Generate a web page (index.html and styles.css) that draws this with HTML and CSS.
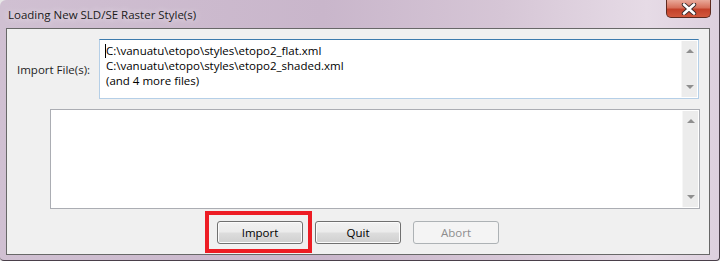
FILE: index.html
```html
<!DOCTYPE html>
<html lang="en">
<head>
    <meta charset="UTF-8">
    <title>Loading New SLD/SE Raster Style(s)</title>
    <link rel="stylesheet" href="styles.css">
</head>
<body>
    <div class="window">
        <div class="titlebar">
            <span class="title">Loading New SLD/SE Raster Style(s)</span>
            <div class="close">
                <svg width="18" height="12" viewBox="0 0 18 12">
                    <path d="M4 1.5 L14 10.5 M14 1.5 L4 10.5" stroke="#3a2a2a" stroke-width="4.4" stroke-linecap="round"/>
                    <path d="M4 1.5 L14 10.5 M14 1.5 L4 10.5" stroke="#ffffff" stroke-width="2.6" stroke-linecap="round"/>
                </svg>
            </div>
        </div>

        <div class="client">
            <div class="file-row">
                <label class="label">Import File(s):</label>
                <div class="textbox files">
                    <div class="text">
                        <div class="line"><span class="caret"></span>C:\vanuatu\etopo\styles\etopo2_flat.xml</div>
                        <div class="line">C:\vanuatu\etopo\styles\etopo2_shaded.xml</div>
                        <div class="line">(and 4 more files)</div>
                    </div>
                    <div class="vscroll">
                        <span class="arrow up"></span>
                        <span class="arrow down"></span>
                    </div>
                </div>
            </div>

            <div class="textbox log">
                <div class="text"></div>
                <div class="vscroll">
                    <span class="arrow up"></span>
                    <span class="arrow down"></span>
                </div>
            </div>

            <div class="buttons">
                <button class="btn">Import</button>
                <button class="btn">Quit</button>
                <button class="btn" disabled>Abort</button>
            </div>
        </div>

        <div class="highlight"></div>
    </div>
</body>
</html>
```

FILE: styles.css
```css
body {
    margin: 0;
    background: #e8e8e8;
    font-family: "Open Sans", "Noto Sans", sans-serif;
    font-size: 11.5px;
    color: #000;
}

.window {
    position: relative;
    width: 720px;
    height: 261px;
    box-sizing: border-box;
    padding: 0 9px 5px 6px;
    background: linear-gradient(90deg, #d0c0d2 0%, #c9b6cb 45%, #d6c6d6 70%, #e6dbe6 90%, #ddd0de 100%);
    border-right: 1px solid #4a3f4a;
    border-bottom: 1px solid #4a3f4a;
    border-radius: 6px 0 4px 4px;
    display: flex;
    flex-direction: column;
}

.titlebar {
    height: 28px;
    display: flex;
    align-items: flex-start;
    justify-content: space-between;
}

.title {
    margin: 7px 0 0 2px;
    font-size: 11.5px;
    color: #1a1a1a;
    text-shadow: 0 0 6px #f4eef4;
}

.close {
    width: 45px;
    height: 18px;
    box-sizing: border-box;
    margin-right: -1px;
    border: 1px solid #5e2a20;
    border-top: none;
    border-radius: 0 0 5px 5px;
    background: linear-gradient(#e9a99a 0%, #d7705b 45%, #c3412a 55%, #d2583d 100%);
    display: flex;
    align-items: center;
    justify-content: center;
}

.client {
    flex: 1;
    background: #f0f0f0;
    border: 1px solid #686868;
    padding: 10px 10px 0 10px;
    display: flex;
    flex-direction: column;
}

.file-row {
    display: flex;
    align-items: center;
}

.label {
    flex: 1;
    color: #1e1e1e;
    padding-top: 1px;
}

.textbox {
    display: flex;
    background: #fff;
    box-sizing: border-box;
}

.files {
    width: 600px;
    height: 60px;
    border: 1px solid #b5cfe7;
    border-top-color: #3d7bad;
}

.log {
    width: 650px;
    height: 100px;
    margin: 10px 0 0 33px;
    align-self: flex-start;
    border: 1px solid #abadb3;
}

.text {
    flex: 1;
    padding: 3px 0 0 6px;
}

.line {
    line-height: 15px;
    white-space: nowrap;
    position: relative;
}

.caret {
    position: absolute;
    left: -1px;
    top: 1px;
    width: 1px;
    height: 14px;
    background: #000;
}

.vscroll {
    width: 15px;
    margin: 1px 1px 1px 0;
    background: #ececec;
    border-left: 1px solid #f6f6f6;
    display: flex;
    flex-direction: column;
    justify-content: space-between;
    align-items: center;
    padding: 8px 0;
}

.arrow {
    width: 0;
    height: 0;
    border-left: 4px solid transparent;
    border-right: 4px solid transparent;
}

.arrow.up {
    border-bottom: 4px solid #8f8f8f;
}

.arrow.down {
    border-top: 4px solid #8f8f8f;
}

.buttons {
    display: flex;
    justify-content: center;
    gap: 12px;
    margin-top: 12px;
}

.btn {
    width: 86px;
    height: 23px;
    padding: 0;
    font-family: "Open Sans", "Noto Sans", sans-serif;
    font-size: 11.5px;
    color: #000;
    border: 1px solid #707070;
    border-radius: 3px;
    background: linear-gradient(#f2f2f2 0%, #ebebeb 48%, #dddddd 52%, #cfcfcf 100%);
    box-shadow: inset 0 0 0 1px #fbfbfb;
}

.btn:disabled {
    color: #8d8d8d;
    border-color: #adb2b5;
    background: #f4f4f4;
    box-shadow: none;
}

.highlight {
    position: absolute;
    left: 205px;
    top: 211px;
    width: 107px;
    height: 42px;
    box-sizing: border-box;
    border: 4px solid #ed1c24;
}
```
